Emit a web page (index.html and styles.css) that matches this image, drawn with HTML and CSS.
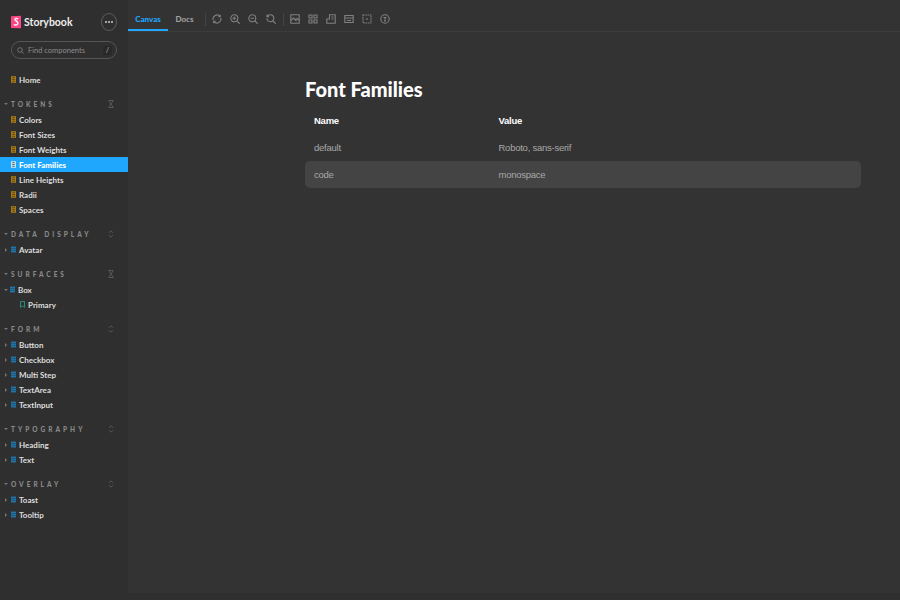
FILE: index.html
```html
<!DOCTYPE html>
<html lang="en">

<head>
    <title>Storybook</title>

    <link rel="stylesheet" href="styles.css">
</head>

<body>
    <svg class="defs" width="0" height="0">
        <symbol id="doc" viewBox="0 0 6 8">
            <path d="M0 0h6v8H0z" fill="currentColor" />
            <path d="M1.500 1.800h3M1.500 4h3M1.500 6.200h3" stroke="#2f2f2f" stroke-width=".8" fill="none" />
        </symbol>
        <symbol id="grid" viewBox="0 0 6 7">
            <path d="M0 0h6v7H0z" fill="currentColor" />
            <path d="M0 2.300h6M0 4.600h6" stroke="#2f2f2f" stroke-width=".5" />
        </symbol>
        <symbol id="mark" viewBox="0 0 6 8">
            <path d="M.6.500h4.800v7L3 5.600.6 7.500z" fill="none" stroke="currentColor" stroke-width="1" />
        </symbol>
    </svg>

    <div class="app">
        <aside class="sidebar">
            <div class="brand">
                <svg class="logo" viewBox="0 0 11 14">
                    <path d="M0 .8 11 0v14L0 13.500z" fill="#ff4785" />
                    <path d="M7.800 3.600C7 3 5 3 4.400 3.900 3.700 5.500 7.800 6 7.600 8.400 7.400 10.600 4.300 10.800 3.200 9.600" fill="none" stroke="#fff" stroke-width="1.500" />
                </svg>
                <span class="brand__name">Storybook</span>
                <button class="brand__menu"><i></i><i></i><i></i></button>
            </div>

            <div class="search">
                <svg viewBox="0 0 10 10">
                    <circle cx="4.300" cy="4.300" r="3.300" fill="none" stroke="currentColor" />
                    <path d="M6.800 6.800 9.500 9.500" stroke="currentColor" />
                </svg>
                <span class="search__text">Find components</span>
                <span class="search__key">/</span>
            </div>

            <nav class="tree">
                <a class="item item--story"><svg><use href="#doc" /></svg>Home</a>

                <div class="group">
                    <div class="group__head"><b class="caret"></b>TOKENS<svg class="group__toggle" viewBox="0 0 6 8"><path d="M.5.500h5M.5 7.500h5M1 1l4 6M5 1 1 7" fill="none" stroke="currentColor" stroke-width=".7" /></svg></div>
                    <a class="item item--story"><svg><use href="#doc" /></svg>Colors</a>
                    <a class="item item--story"><svg><use href="#doc" /></svg>Font Sizes</a>
                    <a class="item item--story"><svg><use href="#doc" /></svg>Font Weights</a>
                    <a class="item item--story item--active"><svg><use href="#doc" /></svg>Font Families</a>
                    <a class="item item--story"><svg><use href="#doc" /></svg>Line Heights</a>
                    <a class="item item--story"><svg><use href="#doc" /></svg>Radii</a>
                    <a class="item item--story"><svg><use href="#doc" /></svg>Spaces</a>
                </div>

                <div class="group">
                    <div class="group__head"><b class="caret"></b>DATA DISPLAY<svg class="group__toggle" viewBox="0 0 6 8"><path d="M1 2.800 3 .8l2 2M1 5.200l2 2 2-2" fill="none" stroke="currentColor" stroke-width=".7" /></svg></div>
                    <a class="item item--comp"><b class="arrow"></b><svg><use href="#grid" /></svg>Avatar</a>
                </div>

                <div class="group">
                    <div class="group__head"><b class="caret"></b>SURFACES<svg class="group__toggle" viewBox="0 0 6 8"><path d="M.5.500h5M.5 7.500h5M1 1l4 6M5 1 1 7" fill="none" stroke="currentColor" stroke-width=".7" /></svg></div>
                    <a class="item item--comp"><b class="caret caret--item"></b><svg><use href="#grid" /></svg>Box</a>
                    <a class="item item--leaf"><svg><use href="#mark" /></svg>Primary</a>
                </div>

                <div class="group">
                    <div class="group__head"><b class="caret"></b>FORM<svg class="group__toggle" viewBox="0 0 6 8"><path d="M1 2.800 3 .8l2 2M1 5.200l2 2 2-2" fill="none" stroke="currentColor" stroke-width=".7" /></svg></div>
                    <a class="item item--comp"><b class="arrow"></b><svg><use href="#grid" /></svg>Button</a>
                    <a class="item item--comp"><b class="arrow"></b><svg><use href="#grid" /></svg>Checkbox</a>
                    <a class="item item--comp"><b class="arrow"></b><svg><use href="#grid" /></svg>Multi Step</a>
                    <a class="item item--comp"><b class="arrow"></b><svg><use href="#grid" /></svg>TextArea</a>
                    <a class="item item--comp"><b class="arrow"></b><svg><use href="#grid" /></svg>TextInput</a>
                </div>

                <div class="group">
                    <div class="group__head"><b class="caret"></b>TYPOGRAPHY<svg class="group__toggle" viewBox="0 0 6 8"><path d="M1 2.800 3 .8l2 2M1 5.200l2 2 2-2" fill="none" stroke="currentColor" stroke-width=".7" /></svg></div>
                    <a class="item item--comp"><b class="arrow"></b><svg><use href="#grid" /></svg>Heading</a>
                    <a class="item item--comp"><b class="arrow"></b><svg><use href="#grid" /></svg>Text</a>
                </div>

                <div class="group">
                    <div class="group__head"><b class="caret"></b>OVERLAY<svg class="group__toggle" viewBox="0 0 6 8"><path d="M1 2.800 3 .8l2 2M1 5.200l2 2 2-2" fill="none" stroke="currentColor" stroke-width=".7" /></svg></div>
                    <a class="item item--comp"><b class="arrow"></b><svg><use href="#grid" /></svg>Toast</a>
                    <a class="item item--comp"><b class="arrow"></b><svg><use href="#grid" /></svg>Tooltip</a>
                </div>
            </nav>
        </aside>

        <main class="main">
            <header class="toolbar">
                <a class="tab tab--active">Canvas</a>
                <a class="tab">Docs</a>
                <span class="sep"></span>
                <div class="tools">
                    <svg viewBox="0 0 10 10"><path d="M1.200 6A4 4 0 0 1 8 2.300M8.800 4A4 4 0 0 1 2 7.700M8.300.8v2H6.300M1.700 9.200v-2h2" /></svg>
                    <svg viewBox="0 0 10 10"><circle cx="4.300" cy="4.300" r="3.500" /><path d="M7 7l2.700 2.700M2.500 4.300h3.600M4.300 2.500v3.600" /></svg>
                    <svg viewBox="0 0 10 10"><circle cx="4.300" cy="4.300" r="3.500" /><path d="M7 7l2.700 2.700M2.500 4.300h3.600" /></svg>
                    <svg viewBox="0 0 10 10"><path d="M1.300 2.400A3.500 3.500 0 1 1 .8 4.300M7 7l2.700 2.700M1 .6v2h2" /></svg>
                </div>
                <span class="sep sep--tight"></span>
                <div class="tools">
                    <svg viewBox="0 0 10 10"><path d="M.8.800h8.400v8.400H.8zM.8 6.500 3.500 4l3 3M5.500 5.500 7 4.500l2.200 2" /></svg>
                    <svg viewBox="0 0 10 10"><path d="M1 1h3v3H1zM6 1h3v3H6zM1 6h3v3H1zM6 6h3v3H6z" /></svg>
                    <svg viewBox="0 0 10 10"><path d="M3.500.8h5.700v8.400H.8V5h2.700zM5.500 3H7.500M5.500 5h2" /></svg>
                    <svg viewBox="0 0 10 10"><path d="M.8 1.500h8.400v7H.8zM.8 4h8.400M3 6.500h4" /></svg>
                    <svg viewBox="0 0 10 10"><path d="M1 1h8v8H1z" stroke-dasharray="1.500 .7" /><path d="M5 4v2" /></svg>
                    <svg viewBox="0 0 10 10"><circle cx="5" cy="5" r="4.200" /><path d="M3.500 3.500h3M5 3.500V7M4 7h2" /></svg>
                </div>
            </header>

            <section class="canvas">
                <h1 class="title">Font Families</h1>
                <div class="table">
                    <div class="row row--head"><span>Name</span><span>Value</span></div>
                    <div class="row"><span>default</span><span>Roboto, sans-serif</span></div>
                    <div class="row row--alt"><span>code</span><span>monospace</span></div>
                </div>
            </section>
        </main>
    </div>
</body>

</html>
```

FILE: styles.css
```css
* {
    padding: 0;
    margin: 0;
    box-sizing: border-box;
}

html,
body {
    width: 100%;
    height: 100%;
    overflow: hidden;
}

body {
    background: #2f2f2f;
    font-family: "Lato", sans-serif;
    color: #fff;
}

.defs {
    position: absolute;
}

.app {
    display: flex;
    height: 600px;
}

/* Sidebar */
.sidebar {
    width: 128px;
    flex-shrink: 0;
    padding: 12px 11px 0 0;
    background: #2f2f2f;
}

.brand {
    display: flex;
    align-items: center;
    height: 20px;
    padding-left: 11px;
}

.logo {
    width: 10px;
    height: 14px;
}

.brand__name {
    margin-left: 3px;
    font-size: 10.5px;
    font-weight: 700;
    color: #eee;
}

.brand__menu {
    display: flex;
    align-items: center;
    justify-content: center;
    gap: 1px;
    width: 16px;
    height: 18px;
    margin-left: auto;
    border: 1px solid #5c5c5c;
    border-radius: 50%;
    background: none;
}

.brand__menu i {
    width: 2px;
    height: 2px;
    border-radius: 50%;
    background: #ccc;
}

.search {
    display: flex;
    align-items: center;
    height: 18px;
    margin: 9px 0 0 11px;
    padding: 0 4px 0 5px;
    border: 1px solid #555;
    border-radius: 9px;
    color: #8c8c8c;
    font-size: 7.500px;
}

.search svg {
    width: 7px;
    height: 7px;
    margin-right: 4px;
}

.search__key {
    width: 9px;
    height: 9px;
    margin-left: auto;
    background: #292929;
    color: #aaa;
    line-height: 9px;
    text-align: center;
}

.tree {
    margin-top: 13px;
}

.group {
    margin-top: 9px;
}

.group__head {
    display: flex;
    align-items: center;
    height: 16px;
    padding-left: 4px;
    font-size: 6.500px;
    font-weight: 900;
    letter-spacing: 3px;
    color: #8a8a8a;
}

.group__toggle {
    width: 6px;
    height: 8px;
    margin-left: auto;
    margin-right: 3px;
    color: #6a6a6a;
}

.caret {
    width: 0;
    height: 0;
    margin-right: 3px;
    border-left: 2px solid transparent;
    border-right: 2px solid transparent;
    border-top: 2px solid #777;
}

.caret--item {
    margin-left: -1px;
    margin-right: 2px;
}

.arrow {
    width: 0;
    height: 0;
    margin-right: 4px;
    border-top: 2px solid transparent;
    border-bottom: 2px solid transparent;
    border-left: 2px solid #777;
}

.item {
    display: flex;
    align-items: center;
    height: 15px;
    padding-left: 5px;
    width: 128px;
    font-size: 8px;
    font-weight: 700;
    color: #ddd;
    white-space: nowrap;
}

.item svg {
    width: 5px;
    height: 7px;
    margin-right: 3px;
}

.item--story {
    padding-left: 11px;
}

.item--story svg {
    color: #a87a14;
}

.item--comp svg {
    color: #1e76ad;
}

.item--leaf {
    padding-left: 20px;
}

.item--leaf svg {
    color: #2a9d8f;
}

.item--active {
    background: #1ea7fd;
    color: #fff;
    font-weight: 900;
}

.item--active svg {
    color: #bfe5fb;
}

/* Main */
.main {
    display: flex;
    flex-direction: column;
    flex: 1;
    height: 593px;
    background: #333;
}

.toolbar {
    display: flex;
    align-items: center;
    height: 32px;
    flex-shrink: 0;
    padding-top: 7px;
    border-bottom: 1px solid #3c3c3c;
}

.tab {
    display: flex;
    align-items: center;
    justify-content: center;
    height: 24px;
    width: 40px;
    padding-top: 2px;
    border-bottom: 2px solid transparent;
    font-size: 8px;
    font-weight: 900;
    color: #a0a0a0;
}

.tab + .tab {
    width: 33px;
}

.tab--active {
    color: #1ea7fd;
    border-bottom-color: #1ea7fd;
}

.sep {
    width: 1px;
    height: 13px;
    margin-left: 3.500px;
    background: #444;
}

.sep--tight {
    margin-left: 0;
}

.tools {
    display: flex;
    align-items: center;
    gap: 8px;
    padding: 0 6.500px;
}

.tools svg {
    width: 10px;
    height: 10px;
    fill: none;
    stroke: #808080;
    stroke-width: 1.100;
}

.canvas {
    padding: 46px 39px 0 177px;
}

.title {
    font-family: "Lato", sans-serif;
    font-size: 20px;
    font-weight: 900;
    line-height: 22px;
    color: #fff;
}

.table {
    margin-top: 7px;
    font-family: "Liberation Sans", sans-serif;
    font-size: 9.500px;
    letter-spacing: -.25px;
}

.row {
    display: grid;
    grid-template-columns: 184.500px 1fr;
    align-items: center;
    height: 27px;
    padding: 0 9px;
    color: #a8a8a8;
    border-radius: 5px;
}

.row--head {
    font-weight: 700;
    color: #fff;
}

.row--alt {
    background: #444;
}
```
